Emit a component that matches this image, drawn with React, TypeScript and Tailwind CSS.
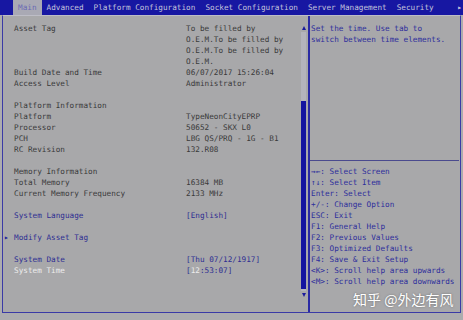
import React from 'react';

// BIOS setup "Main" screen

type Row = {
  label?: string;
  value?: React.ReactNode;
  kind?: 'plain' | 'link' | 'active' | 'sub';
};

const rows: Row[] = [
  { label: 'Asset Tag', value: 'To be filled by' },
  { value: 'O.E.M.To be filled by' },
  { value: 'O.E.M.To be filled by' },
  { value: 'O.E.M.' },
  { label: 'Build Date and Time', value: '06/07/2017 15:26:04' },
  { label: 'Access Level', value: 'Administrator' },
  {},
  { label: 'Platform Information' },
  { label: 'Platform', value: 'TypeNeonCityEPRP' },
  { label: 'Processor', value: '50652 - SKX L0' },
  { label: 'PCH', value: 'LBG QS/PRQ - 1G - B1' },
  { label: 'RC Revision', value: '132.R08' },
  {},
  { label: 'Memory Information' },
  { label: 'Total Memory', value: '16384 MB' },
  { label: 'Current Memory Frequency', value: '2133 MHz' },
  {},
  { label: 'System Language', value: <span className="text-[#2e2e92]">[English]</span>, kind: 'link' },
  {},
  { label: 'Modify Asset Tag', kind: 'sub' },
  {},
  { label: 'System Date', value: <span className="text-[#2e2e92]">[Thu 07/12/1917]</span>, kind: 'link' },
  {
    label: 'System Time',
    value: (
      <span className="text-[#2e2e92]">
        [<span className="text-[#ececec]">12</span>:53:07]
      </span>
    ),
    kind: 'active',
  },
];

const tabs = ['Main', 'Advanced', 'Platform Configuration', 'Socket Configuration', 'Server Management', 'Security'];

const keys = [
  '→←: Select Screen',
  '↑↓: Select Item',
  'Enter: Select',
  '+/-: Change Option',
  'ESC: Exit',
  'F1: General Help',
  'F2: Previous Values',
  'F3: Optimized Defaults',
  'F4: Save & Exit Setup',
  '<K>: Scroll help area upwards',
  '<M>: Scroll help area downwards',
];

const labelColor = (kind?: Row['kind']) => {
  if (kind === 'link' || kind === 'sub') return 'text-[#2e2e92]';
  if (kind === 'active') return 'text-[#ececec]';
  return 'text-[#3a3a3a]';
};

export default function App() {
  return (
    <div className="relative w-[463px] h-[320px] overflow-hidden bg-[#acacae] font-['DejaVu_Sans_Mono',monospace] text-[7.7px] leading-[11px] text-[#3a3a3a]">
      {/* menu bar */}
      <div className="flex h-[15px] items-stretch bg-[#1717a2] pl-[13px]">
        {tabs.map((t, i) => (
          <div
            key={t}
            className={`flex items-center px-[5px] whitespace-pre ${
              i === 0 ? 'bg-[#a9a9b4] text-[#6a6ab4]' : 'text-[#c4c4dc]'
            }`}
          >
            {t}
          </div>
        ))}
        <div className="ml-auto flex items-center pr-[1px] text-[#c4c4dc]">▸</div>
      </div>

      {/* body */}
      <div className="mx-[2px] flex h-[298px] border-t border-t-[#bdbdc6] border-l border-l-[#3a3aa6] border-r border-r-[#3a3aa6] border-b border-b-[#3a3aa6] bg-[#a8a8aa]">
        {/* left: settings */}
        <div className="w-[298px] pl-[11px] pt-[7px]">
          {rows.map((r, i) => (
            <div key={i} className="grid h-[11px] grid-cols-[172px_1fr] whitespace-pre">
              <div className={`relative ${labelColor(r.kind)}`}>
                {r.kind === 'sub' && (
                  <span className="absolute left-[-10px] top-0 text-[#24249a]">▸</span>
                )}
                {r.label ?? ''}
              </div>
              <div>{r.value ?? ''}</div>
            </div>
          ))}
        </div>

        {/* scroll bar */}
        <div className="flex w-[5px] flex-col pt-[8px]">
          <div className="flex h-[8px] items-center justify-center">
            <div className="h-0 w-0 border-x-[2.5px] border-b-[4px] border-x-transparent border-b-[#1a1a9c]" />
          </div>
          <div className="flex h-[259px] flex-col bg-[#b4b4bc]">
            <div className="flex-1" />
            <div className="mb-[2px] h-[188px] bg-[#1414a0]" />
          </div>
          <div className="flex h-[8px] items-center justify-center">
            <div className="h-0 w-0 border-x-[2.5px] border-t-[4px] border-x-transparent border-t-[#1a1a9c]" />
          </div>
        </div>

        {/* divider */}
        <div className="ml-[2px] w-[2px] bg-[#2a2aa4]" />

        {/* right: help */}
        <div className="flex-1 pt-[7px] pl-[1px] pr-[1px] text-[#2e2e9c] whitespace-pre">
          <div className="h-[132px]">
            <div className="h-[11px]">Set the time. Use tab to</div>
            <div className="h-[11px]">switch between time elements.</div>
          </div>
          <div className="flex h-[11px] items-center -ml-[1px]">
            <div className="h-px w-full bg-[#4a4a8e]" />
          </div>
          {keys.map((k) => (
            <div key={k} className="h-[11px]">
              {k}
            </div>
          ))}
        </div>
      </div>

      {/* watermark */}
      <div className="absolute left-[353px] top-[292px] font-['Noto_Sans_CJK_SC',sans-serif] text-[14px] leading-[14px] text-white [text-shadow:0_0_2px_rgba(60,60,60,0.6)] whitespace-pre">
        知乎 @外边有风
      </div>
    </div>
  );
}
